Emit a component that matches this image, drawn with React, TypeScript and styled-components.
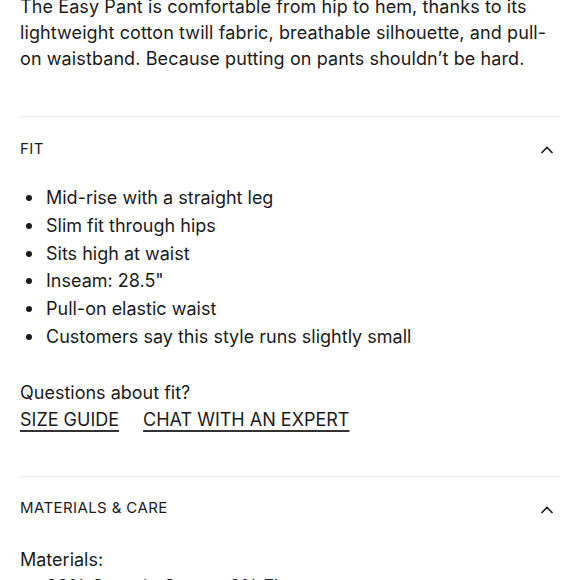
import styled, { createGlobalStyle } from 'styled-components';

const GlobalStyle = createGlobalStyle`
  body {
    margin: 0;
    background: #ffffff;
    color: #1b1b1b;
    font-family: Inter, "Liberation Sans", sans-serif;
    -webkit-font-smoothing: antialiased;
  }
`;

const Page = styled.div`
  width: 580px;
  padding: 0 20px;
  margin-top: -6px;
  box-sizing: border-box;
`;

const Intro = styled.p`
  margin: 0 0 44px;
  font-size: 18px;
  line-height: 26px;
  letter-spacing: 0.1px;
`;

const Section = styled.section`
  border-top: 1px solid #ebebeb;
`;

const SectionHeader = styled.header`
  display: flex;
  align-items: center;
  justify-content: space-between;
  padding-top: 21px;
  height: 20px;
`;

const SectionTitle = styled.h2`
  margin: 0;
  font-size: 15px;
  font-weight: 400;
  letter-spacing: 0.4px;
  text-transform: uppercase;
`;

const Chevron = styled.svg`
  width: 14px;
  height: 10px;
  margin-right: 6px;
  margin-top: 4px;
`;

const SectionBody = styled.div<{ $top: number }>`
  padding-top: ${(p) => p.$top}px;
`;

const BulletList = styled.ul`
  margin: 0;
  padding: 0;
  list-style: none;
  font-size: 18px;
  line-height: 27.8px;
`;

const BulletItem = styled.li`
  position: relative;
  padding-left: 26px;

  &::before {
    content: '';
    position: absolute;
    left: 6px;
    top: 11px;
    width: 6px;
    height: 6px;
    border-radius: 50%;
    background: #1b1b1b;
  }
`;

const Note = styled.p`
  margin: 29px 0 0;
  font-size: 18px;
  line-height: 26px;
`;

const LinkRow = styled.div`
  display: flex;
  gap: 24px;
  margin-bottom: 42px;
`;

const TextLink = styled.a`
  color: #1b1b1b;
  font-size: 18px;
  line-height: 28px;
  text-decoration: underline;
  text-decoration-thickness: 2px;
  text-underline-offset: 4px;
  text-decoration-color: #333;
`;

const Label = styled.p`
  margin: 0;
  font-size: 18px;
  line-height: 26px;
`;

function ChevronUp() {
  return (
    <Chevron viewBox="0 0 14 10">
      <polyline points="1.5,8 7,2.5 12.5,8" fill="none" stroke="#1b1b1b" strokeWidth="1.6" />
    </Chevron>
  );
}

const fitPoints = [
  'Mid-rise with a straight leg',
  'Slim fit through hips',
  'Sits high at waist',
  'Inseam: 28.5"',
  'Pull-on elastic waist',
  'Customers say this style runs slightly small',
];

export default function App() {
  return (
    <>
      <GlobalStyle />
      <Page>
        <Intro>
          The Easy Pant is comfortable from hip to hem, thanks to its lightweight cotton twill fabric,
          breathable silhouette, and pull-on waistband. Because putting on pants shouldn’t be hard.
        </Intro>

        <Section>
          <SectionHeader>
            <SectionTitle>Fit</SectionTitle>
            <ChevronUp />
          </SectionHeader>
          <SectionBody $top={26}>
            <BulletList>
              {fitPoints.map((p) => (
                <BulletItem key={p}>{p}</BulletItem>
              ))}
            </BulletList>
            <Note>Questions about fit?</Note>
            <LinkRow>
              <TextLink href="#">SIZE GUIDE</TextLink>
              <TextLink href="#">CHAT WITH AN EXPERT</TextLink>
            </LinkRow>
          </SectionBody>
        </Section>

        <Section>
          <SectionHeader>
            <SectionTitle>Materials &amp; Care</SectionTitle>
            <ChevronUp />
          </SectionHeader>
          <SectionBody $top={29}>
            <Label>Materials:</Label>
            <BulletList>
              <BulletItem>98% Organic Cotton, 2% Elastane</BulletItem>
            </BulletList>
          </SectionBody>
        </Section>
      </Page>
    </>
  );
}
